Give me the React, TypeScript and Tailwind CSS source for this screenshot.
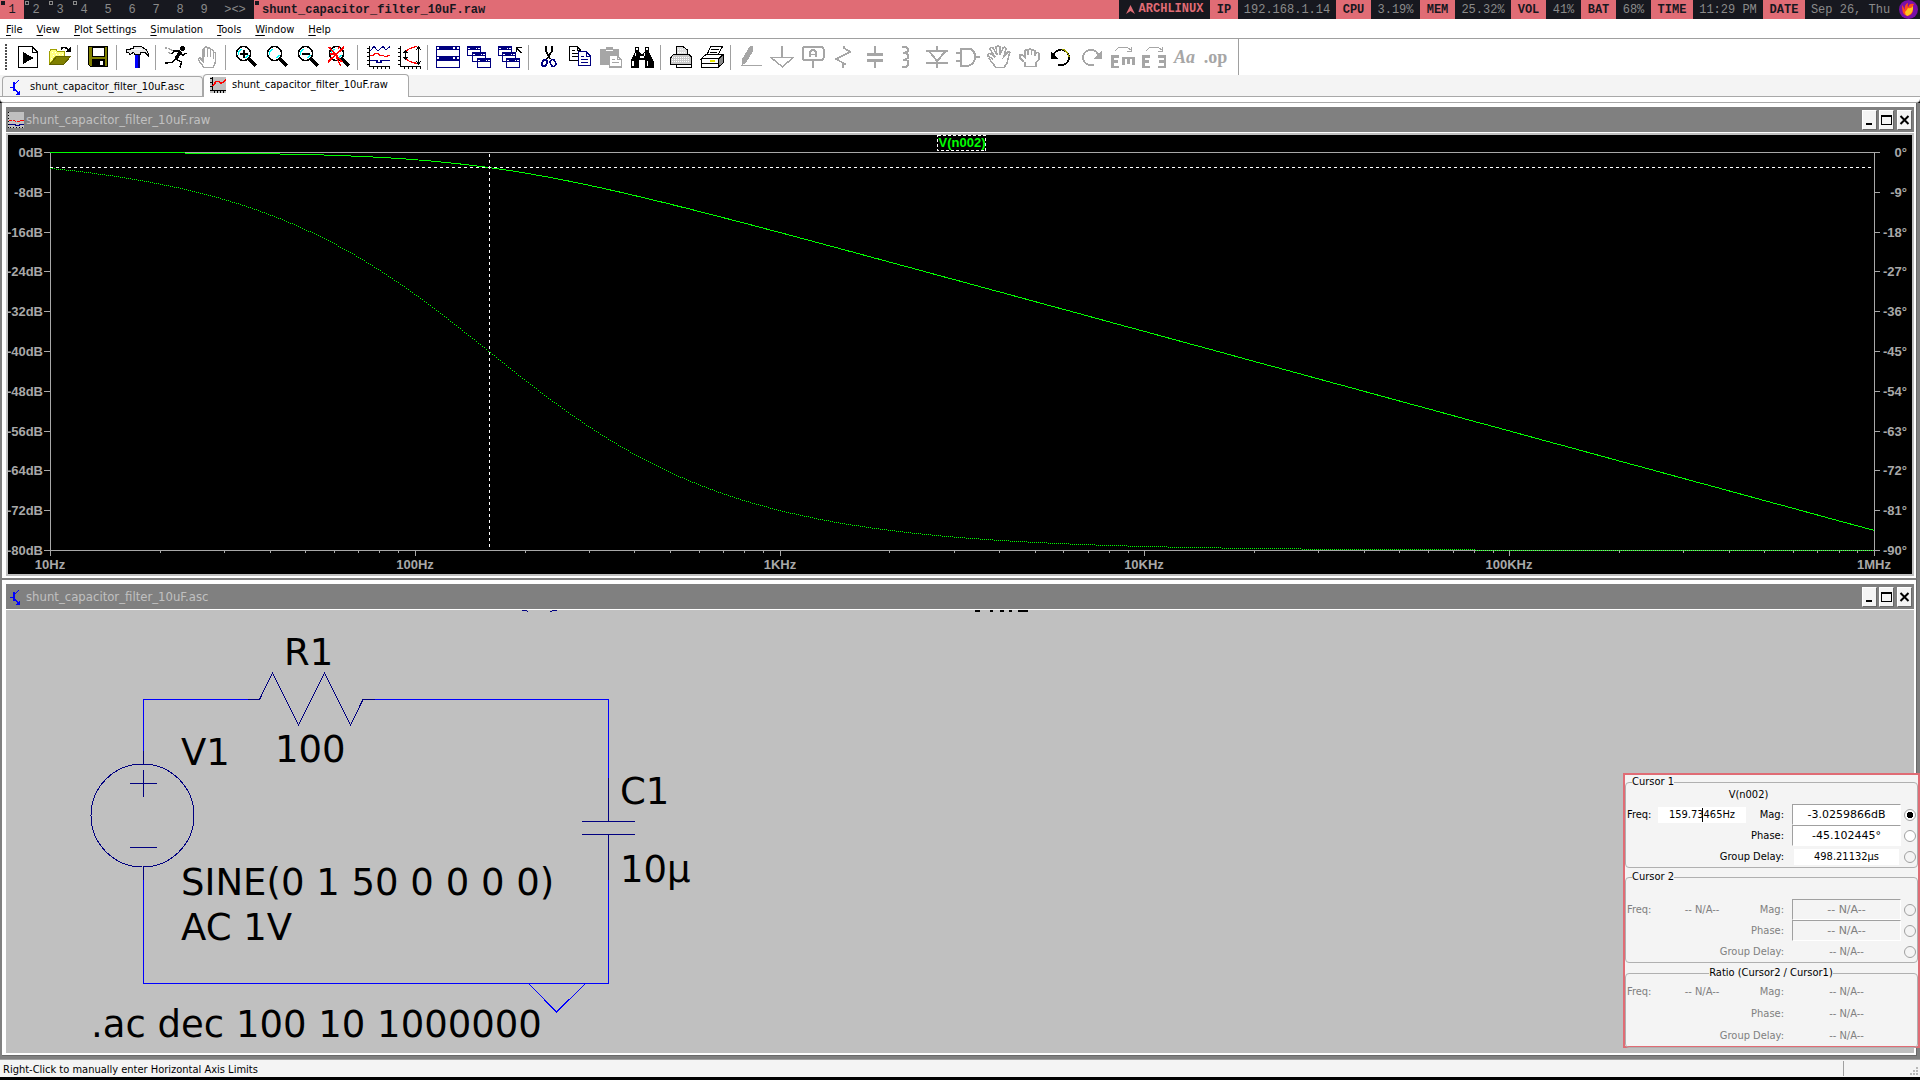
import React from "react";

const UI = "font-['DejaVu_Sans_Condensed','DejaVu_Sans',sans-serif]";

/* ---------- desktop status bar ---------- */

const tags = [
  { n: "1", active: true, mark: true },
  { n: "2", mark: true },
  { n: "3", mark: true },
  { n: "4", mark: true },
  { n: "5" },
  { n: "6" },
  { n: "7" },
  { n: "8" },
  { n: "9" },
];

const stats = [
  { k: "IP", kw: "w-7", v: "192.168.1.14", vw: "w-[98px]" },
  { k: "CPU", kw: "w-[35px]", v: "3.19%", vw: "w-[49px]" },
  { k: "MEM", kw: "w-[35px]", v: "25.32%", vw: "w-14" },
  { k: "VOL", kw: "w-[35px]", v: "41%", vw: "w-[35px]" },
  { k: "BAT", kw: "w-[35px]", v: "68%", vw: "w-[35px]" },
  { k: "TIME", kw: "w-[42px]", v: "11:29 PM", vw: "w-[70px]" },
  { k: "DATE", kw: "w-[42px]", v: "Sep 26, Thu", vw: "w-[91px]" },
];

function StatusStrip() {
  return (
    <header className="flex h-[19px] shrink-0 items-stretch whitespace-nowrap bg-[#17181f] font-['Liberation_Mono',monospace] text-xs leading-[21px] text-[#8a8a8a]">
      {tags.map((t) => (
        <button
          key={t.n}
          className={
            t.active
              ? "relative w-6 shrink-0 bg-[#e06c75] text-center text-[#17181f]"
              : "relative w-6 shrink-0 text-center"
          }
        >
          {t.mark && (
            <span
              className={
                t.active
                  ? "absolute left-px top-px h-1 w-1 bg-[#17181f]"
                  : "absolute left-px top-px h-1 w-1 border border-[#8a8a8a]"
              }
            />
          )}
          {t.n}
        </button>
      ))}
      <button className="w-[38px] shrink-0 text-center">&gt;&lt;&gt;</button>
      <div className="relative min-w-0 flex-1 bg-[#e06c75] pl-2 font-bold text-[#17181f]">
        <span className="absolute left-px top-px h-1 w-1 bg-[#17181f]" />
        shunt_capacitor_filter_10uF.raw
      </div>
      <div className="flex w-[91px] items-center justify-center gap-1 font-bold text-[#e06c75]">
        <svg width="9" height="9" viewBox="0 0 9 9" aria-hidden="true">
          <path d="M4.5 0L9 9L4.5 6L0 9Z" fill="#e06c75" />
        </svg>
        ARCHLINUX
      </div>
      {stats.map((s) => (
        <React.Fragment key={s.k}>
          <div className={`${s.kw} bg-[#e06c75] text-center font-bold text-[#17181f]`}>{s.k}</div>
          <div className={`${s.vw} text-center`}>{s.v}</div>
        </React.Fragment>
      ))}
      <svg width="24" height="19" viewBox="0 0 24 19" aria-hidden="true">
        <circle cx="12.500" cy="9.500" r="9.500" fill="#7b0fa8" />
        <path d="M6 5Q8 7 8.500 10Q8.500 4 12 3Q11 6 12.500 7Q13 3 18 4Q16 6 17 9Q17 15 11.500 16Q7 15 6.500 11Q6 8 6 5Z" fill="#ff4a1c" />
        <path d="M9 12Q11 10 12 8Q15 9 17 6Q18 13 11.500 16Q9 15 9 12Z" fill="#ffc21a" />
      </svg>
    </header>
  );
}

/* ---------- menu ---------- */

const menus = ["File", "View", "Plot Settings", "Simulation", "Tools", "Window", "Help"];

function MenuBar() {
  return (
    <nav className="flex h-5 shrink-0 items-end gap-3.5 border-b border-[#a0a0a0] bg-white pl-1.5 text-[11px] text-black">
      {menus.map((m) => (
        <button key={m} className="whitespace-nowrap leading-4">
          <span className="underline underline-offset-2">{m[0]}</span>
          {m.slice(1)}
        </button>
      ))}
    </nav>
  );
}

/* ---------- toolbar icons ---------- */

const G = "#a6a6a6";
const NAVY = "#000080";

function Lens({ children }: { children?: React.ReactNode }) {
  return (
    <>
      <path d="M15 14L22 21" stroke="#000" strokeWidth="3.500" />
      <circle cx="9.500" cy="8.500" r="7" fill="#fff" stroke="#000" strokeWidth="1.500" />
      <path d="M4.500 10V7L7 4" fill="none" stroke="#00ffff" strokeWidth="1.500" />
      <path d="M12 13L14.500 10" fill="none" stroke="#00ffff" strokeWidth="1.500" />
      {children}
    </>
  );
}

function MiniWindow({ x, y }: { x: number; y: number }) {
  return (
    <>
      <rect x={x + 0.5} y={y + 0.5} width="13" height="9" fill="#fff" stroke={NAVY} />
      <rect x={x} y={y} width="14" height="4" fill={NAVY} />
      <path d={`M${x + 1} ${y + 2}h2M${x + 9} ${y + 2}h1M${x + 11} ${y + 2}h2`} stroke="#fff" />
    </>
  );
}

const icons: Record<string, React.ReactNode> = {
  Run: (
    <>
      <path d="M2.500 1.500H16L21.500 7V22.500H2.500Z" fill="#fff" stroke="#000" strokeWidth="1.300" />
      <path d="M16 1.500V7H21.500" fill="none" stroke="#000" />
      <path d="M7 7L17.500 13L7 19Z" fill="#000" />
    </>
  ),
  Open: (
    <>
      <path d="M2.500 18V6.500L4 4.500H9L10.500 6.500H17.500V11H9L3 19Z" fill="#ffff80" stroke="#a0a000" />
      <path d="M5 7h1M8 7h1M12 9h1M6 10h1M4 13h1M15 9h1M9 9h1" stroke="#fff" />
      <path d="M3 19.500L9.500 11.500H23.500L16.500 19.500Z" fill="#808000" stroke="#606000" />
      <path d="M14 4.500C15 1.500 19 1.500 21.500 5.500" fill="none" stroke="#000" strokeWidth="1.500" />
      <path d="M23.500 2V7H18Z" fill="#000" />
    </>
  ),
  Save: (
    <>
      <path d="M2.500 1.500H21.500V21H4L2.500 19.500Z" fill="#808000" stroke="#000" />
      <rect x="6" y="2" width="12" height="9.500" fill="#fff" stroke="#000" />
      <rect x="6" y="14" width="13" height="7" fill="#000" />
      <rect x="14" y="15.500" width="3" height="4.500" fill="#fff" />
    </>
  ),
  "Control panel": (
    <>
      <rect x="10" y="8" width="5" height="15" fill="#0000ff" />
      <path d="M14 8V23" stroke={NAVY} strokeWidth="2" />
      <path d="M8 4V1.500H16L19.500 3.500Q23 5 23.500 11L20 7.500H16L15 9.500H10L8.500 7.500L5 9.500L3.500 7.500H1V4.500H5L7 3Z" fill="#e8e8e8" stroke="#000" />
      <path d="M7 4.500H17" stroke="#fff" />
    </>
  ),
  "Run simulation": (
    <>
      <circle cx="18.500" cy="3.500" r="2.500" fill="#000" />
      <path d="M16.500 6L12 14" stroke="#000" strokeWidth="3.500" />
      <path d="M16 6L10 6L8 9M15 8L19 10L22.500 8M12 14L17.500 17L16 22.500M12 14L8 17.500L1 18" fill="none" stroke="#000" strokeWidth="1.500" />
      <path d="M1 3L3 3M4 3L9 6M4 7L7 9" stroke={G} strokeWidth="1.300" />
    </>
  ),
  Halt: (
    <path d="M3 14L5 13L8 16V5Q8 3.500 9.500 4V12M9.500 12V3Q10.500 1 12.500 3V12M12.500 4Q14 1.500 15.500 4V12M15.500 5Q17 4 18.500 6V14M18.500 8Q20.500 7 20.500 9V17L18 22.500H9L3 14.500" fill="none" stroke={G} strokeWidth="1.500" />
  ),
  "Zoom in": <Lens><path d="M5.500 8.500H14M9.500 4.500V13" stroke="#000" strokeWidth="2" /></Lens>,
  "Zoom back": <Lens />,
  "Zoom out": <Lens><path d="M5.500 8.500H14" stroke="#000" strokeWidth="2" /></Lens>,
  "Zoom full": (
    <Lens>
      <path d="M2 2L15 17M1 17L17 2" stroke="#ff0000" strokeWidth="1.800" />
      <path d="M3 9H7M11 4L13 1M9 12L14 21" stroke="#ff0000" strokeWidth="1.300" />
    </Lens>
  ),
  Autorange: (
    <>
      <path d="M3.500 1V21.500H24M0.500 3.500H3M0.500 7.500H3M0.500 11.500H3M0.500 15.500H3M0.500 19.500H3M7.500 22V24M11.500 22V24M15.500 22V24M19.500 22V24M23.500 22V24" fill="none" stroke="#000" />
      <path d="M4 6L8 1.500L12 6L17 1.500L20 5L24 1.500" fill="none" stroke={NAVY} />
      <path d="M4 10.500H7L9 8.500H12L14 10.500H17L19 12L24 10" fill="none" stroke="#ff0000" />
      <path d="M4 15.500H11V17.500H15V15.500H24" fill="none" stroke={NAVY} strokeWidth="1.300" />
    </>
  ),
  "Axis limits": (
    <>
      <path d="M3.500 1V21.500H24M0.500 3.500H3M0.500 7.500H3M0.500 11.500H3M0.500 15.500H3M0.500 19.500H3M7.500 22V24M11.500 22V24M15.500 22V24M19.500 22V24M23.500 22V24" fill="none" stroke="#000" />
      <path d="M9 6Q12 3 20 1.500M9 14Q12 17 20 18.500" fill="none" stroke="#ff0000" strokeWidth="1.300" />
      <path d="M8.500 6V14M6.500 8L8.500 6L10.500 8M6.500 12L8.500 14L10.500 12M21.500 2V19M19 5L21.500 2L24 5M19 16L21.500 19L24 16" fill="none" stroke="#000" />
    </>
  ),
  Tile: (
    <>
      <rect x="0.500" y="1.500" width="23" height="10" fill="#fff" stroke={NAVY} />
      <rect x="0" y="1" width="24" height="4" fill={NAVY} />
      <rect x="0.500" y="11.500" width="23" height="11" fill="#fff" stroke={NAVY} />
      <rect x="0" y="11" width="24" height="5" fill={NAVY} />
      <path d="M1 3H3M17 3H19M21 3H23M1 13H3M17 13H19M21 13H23" stroke="#fff" strokeWidth="1.500" />
    </>
  ),
  Cascade: (
    <>
      <MiniWindow x={0} y={1} />
      <MiniWindow x={5} y={7} />
      <MiniWindow x={10} y={13} />
    </>
  ),
  "Close all": (
    <>
      <MiniWindow x={0} y={1} />
      <MiniWindow x={4} y={7} />
      <MiniWindow x={8} y={13} />
      <path d="M18.500 7V2.500H24M19 3L23.500 8" fill="none" stroke="#000" strokeWidth="1.300" />
    </>
  ),
  Cut: (
    <>
      <path d="M9 1V6L13 14M15 1V6L10 14" fill="none" stroke="#000" strokeWidth="1.700" />
      <ellipse cx="7.500" cy="18" rx="2.500" ry="3.500" fill="none" stroke={NAVY} strokeWidth="1.700" transform="rotate(25 7.500 18)" />
      <ellipse cx="16" cy="18" rx="2.500" ry="3.500" fill="none" stroke={NAVY} strokeWidth="1.700" transform="rotate(-25 16 18)" />
    </>
  ),
  Copy: (
    <>
      <path d="M1.500 1.500H9L12.500 5V15.500H1.500Z" fill="#fff" stroke="#000" />
      <path d="M9 1.500V5H12.500M3.500 5.500H7M3.500 8.500H10M3.500 11.500H10" fill="none" stroke="#000" />
      <path d="M10.500 6.500H18L22.500 11V20.500H10.500Z" fill="#fff" stroke={NAVY} strokeWidth="1.300" />
      <path d="M18 6.500V11H22.500M13 11.500H16M13 14.500H20M13 17.500H20" fill="none" stroke={NAVY} />
    </>
  ),
  Paste: (
    <>
      <path d="M1 4H7V2H14V4H20V20H1Z" fill={G} />
      <path d="M7 5.500H14" stroke="#fff" />
      <path d="M10.500 10.500H18L22.500 14.500V22H10.500Z" fill="#fff" stroke={G} strokeWidth="1.300" />
      <path d="M13 14.500H16M13 17.500H20M18 10.500V14.500H22.500" fill="none" stroke={G} />
    </>
  ),
  Find: (
    <>
      <path d="M5 2H9V6L11 9H13L15 6V2H19V7L23.500 16V23H15V15H9V23H0.500V16L5 7Z" fill="#000" />
      <path d="M6 4H8M16 4H18M5.500 8V11M3 16V21M14.500 8V11M17.500 16V21M10 12H14" stroke="#fff" strokeWidth="1.300" />
    </>
  ),
  "Print setup": (
    <>
      <path d="M7.500 9V1.500H14L18.500 5V9" fill="#ddd" stroke="#000" />
      <path d="M1.500 13L4.500 9.500H20L22.500 12V19.500H1.500Z" fill="#c9c9c9" stroke="#000" />
      <path d="M3 12.500H21M3 14.500H21M3 16.500H21M9 4.500H14M9 7H16" stroke="#fff" strokeDasharray="1 1" />
      <path d="M7.500 19.500V22.500H22V19.500" fill="#fff" stroke="#000" />
    </>
  ),
  Print: (
    <>
      <path d="M7 10L10.500 1.500H22.500L18 10Z" fill="#fff" stroke="#000" />
      <path d="M11 4.500H19M10 7H17" stroke="#000" />
      <path d="M1 14L6 9.500H23L18.500 14Z" fill="#fff" stroke="#000" />
      <path d="M18.500 14L23 10V18L18.500 22Z" fill="#888" stroke="#000" />
      <rect x="1" y="13.500" width="17.500" height="8.500" fill="#fff" stroke="#000" />
      <path d="M1 18.500H18" stroke="#000" />
      <path d="M10 16H15" stroke="#e8e800" strokeWidth="1.500" />
    </>
  ),
  Wire: (
    <>
      <path d="M11 1H14V6L7 18L3 20V14Z" fill={G} />
      <path d="M2 20.500H23" stroke={G} />
    </>
  ),
  Ground: <path d="M12 1V11.500M1 12.500H23L12.500 22Z" fill="none" stroke={G} strokeWidth="1.500" />,
  "Label net": (
    <>
      <rect x="1.500" y="2" width="21" height="13" rx="2" fill="none" stroke={G} strokeWidth="2" />
      <path d="M12 15V23M9 12V7L11 5H13L15 7V12M9 9.500H15" fill="none" stroke={G} strokeWidth="1.700" />
    </>
  ),
  Resistor: <path d="M12 1V3L18.500 7L4 14L13 19L11 20V23" fill="none" stroke={G} strokeWidth="1.700" />,
  Capacitor: (
    <>
      <path d="M12 1V9M12 15V23" stroke={G} strokeWidth="1.500" />
      <path d="M4 9.500H20M4 15H20" stroke={G} strokeWidth="3" />
    </>
  ),
  Inductor: <path d="M8 2H12Q15 3 14 6L11 8H9M11 8Q16 9 14 13L11 14.500H9M11 14.500Q16 16 14 20L12 22H8" fill="none" stroke={G} strokeWidth="2" />,
  Diode: <path d="M12 1V5M1 5.500H23M4 6L12 16L21 6M1 17.500H23M12 17V23" fill="none" stroke={G} strokeWidth="2" />,
  Component: <path d="M5 3.500H13Q19 5 19 12Q19 18 13 20.500H5ZM0 8H5M0 16H5M19 12H24" fill="none" stroke={G} strokeWidth="2" />,
  Move: (
    <path d="M6 14L1 11Q0 8 4 9L8 12L3 4Q3 2 6 3L10 10L9 2Q11 0 13 2V10L16 3Q18 1 19 4L17 11L21 7Q24 6 22 10L20 18L17 22.500H9L1.500 13" fill="none" stroke={G} strokeWidth="1.500" />
  ),
  Drag: (
    <path d="M6 17L2 13V10Q4 9 7 12V6Q8 4 10 6V10V5Q12 3 13.500 5V10V6Q15 4 17 6V11L18 8Q21 6 21 10V14L18 18V21.500H7V17" fill="none" stroke={G} strokeWidth="1.500" />
  ),
  Undo: (
    <>
      <path d="M3 12Q8 3 14 5Q21 8 20 14Q18 21 9 20" fill="none" stroke="#000" strokeWidth="1.600" />
      <path d="M13 4Q19 6 20 12" fill="none" stroke="#a0a000" strokeWidth="1.300" />
      <path d="M1.500 6V14H9Z" fill="#000" />
    </>
  ),
  Redo: (
    <>
      <path d="M20 12Q15 3 9 5Q2 8 3 14Q5 21 14 20" fill="none" stroke={G} strokeWidth="1.700" />
      <path d="M21.500 6V14H14Z" fill={G} />
    </>
  ),
  Rotate: (
    <>
      <path d="M4 6L8 2H16L20 5M20 2V6H16" fill="none" stroke={G} />
      <path d="M8 11.500H1.500V22H8M1.500 16.500H7M11 13H24M12.500 13V20M17.500 13V19M22.500 13V20" fill="none" stroke={G} strokeWidth="2.500" />
    </>
  ),
  Mirror: (
    <>
      <path d="M4 6L8 2H16L20 5M20 2V6H16" fill="none" stroke={G} />
      <path d="M8 11.500H1.500V22H8M1.500 16.500H7M16 11.500H23V22H16M23 16.500H17" fill="none" stroke={G} strokeWidth="2.500" />
    </>
  ),
};

type Tool = { name: string; text?: string; textClass?: string };

const toolGroups: Tool[][] = [
  [{ name: "Run" }, { name: "Open" }],
  [{ name: "Save" }],
  [{ name: "Control panel" }],
  [{ name: "Run simulation" }, { name: "Halt" }],
  [{ name: "Zoom in" }, { name: "Zoom back" }, { name: "Zoom out" }, { name: "Zoom full" }],
  [{ name: "Autorange" }, { name: "Axis limits" }],
  [{ name: "Tile" }, { name: "Cascade" }, { name: "Close all" }],
  [{ name: "Cut" }, { name: "Copy" }, { name: "Paste" }, { name: "Find" }],
  [{ name: "Print setup" }, { name: "Print" }],
  [
    { name: "Wire" },
    { name: "Ground" },
    { name: "Label net" },
    { name: "Resistor" },
    { name: "Capacitor" },
    { name: "Inductor" },
    { name: "Diode" },
    { name: "Component" },
    { name: "Move" },
    { name: "Drag" },
    { name: "Undo" },
    { name: "Redo" },
    { name: "Rotate" },
    { name: "Mirror" },
    { name: "Text", text: "Aa", textClass: "font-['Liberation_Serif',serif] text-lg font-bold italic" },
    { name: "SPICE directive", text: ".op", textClass: "font-['Liberation_Serif',serif] text-lg font-bold" },
  ],
];

function Toolbar() {
  return (
    <div className="flex h-9 shrink-0 bg-white">
      <div className="flex items-center border-r border-[#a0a0a0] pr-[7px]">
        <span className="ml-[5px] mr-[5px] h-[26px] w-0.5 bg-[repeating-linear-gradient(#000_0_2px,#fff_2px_3px)] opacity-70" />
        {toolGroups.map((g, i) => (
          <React.Fragment key={i}>
            {i > 0 && <span className="ml-[3px] mr-1 h-[25px] w-px bg-[#a0a0a0]" />}
            {g.map((t) => (
              <button
                key={t.name}
                aria-label={t.name}
                className="flex h-6 w-[31px] items-center justify-center leading-6 text-[#a6a6a6]"
              >
                {t.text ? (
                  <span className={t.textClass}>{t.text}</span>
                ) : (
                  <svg width="24" height="24" viewBox="0 0 24 24" shapeRendering="crispEdges" aria-hidden="true">
                    {icons[t.name]}
                  </svg>
                )}
              </button>
            ))}
          </React.Fragment>
        ))}
      </div>
    </div>
  );
}

/* ---------- document tabs ---------- */

function SchematicIcon() {
  return (
    <svg width="16" height="16" viewBox="0 0 16 16" shapeRendering="crispEdges" className="shrink-0" aria-hidden="true">
      <path d="M2 8H5" stroke="#0000ff" />
      <path d="M5.500 3V12" stroke="#0000ff" strokeWidth="2" />
      <path d="M6 6L11 1M6 9L11 15" fill="none" stroke="#0000ff" strokeWidth="1.300" />
      <path d="M11.500 12V15.500H8Z" fill="#0000ff" />
    </svg>
  );
}

function WaveIcon({ two }: { two?: boolean }) {
  return (
    <svg width="16" height="16" viewBox="0 0 16 16" shapeRendering="crispEdges" className="shrink-0" aria-hidden="true">
      <rect width="16" height="16" fill="#c0c0c0" />
      {two ? (
        <>
          <path d="M0.500 0V16M2 15.500H16" stroke="#000" strokeDasharray="1 2" />
          <path d="M1 8.500H6L8 9.500H11L13 8.500H16" fill="none" stroke="#ff0000" strokeDasharray="3 1" />
          <path d="M1 12.500H7V13.500H11V12.500H16" fill="none" stroke={NAVY} />
        </>
      ) : (
        <>
          <path d="M2.500 0V13.500H16M0 1.500H2M0 5.500H2M0 9.500H2M0 13.500H2M4.500 14V16M7.500 14V16M10.500 14V16M13.500 14V16" fill="none" stroke="#000" strokeWidth="1.300" />
          <path d="M3 9L6 4.500H9L11 6.500L16 3" fill="none" stroke="#ff0000" strokeWidth="1.500" />
        </>
      )}
    </svg>
  );
}

function Tabs() {
  return (
    <div className="flex h-[22px] shrink-0 items-end border-b border-[#a8a8a8] bg-[#f4f4f4] pl-0.5 text-[11px] text-black">
      <button className="flex h-5 w-[201px] items-center gap-1.5 rounded-t-sm border border-b-0 border-[#a8a8a8] pl-[5px] pt-px">
        <SchematicIcon />
        shunt_capacitor_filter_10uF.asc
      </button>
      <button className="-mb-px flex h-[23px] w-[206px] items-center gap-1.5 rounded-t-sm border border-b-0 border-[#a8a8a8] bg-white pb-0.5 pl-1.5">
        <WaveIcon />
        shunt_capacitor_filter_10uF.raw
      </button>
    </div>
  );
}

/* ---------- MDI window ---------- */

function Caption({ icon, title }: { icon: React.ReactNode; title: string }) {
  const btn =
    "flex h-5 w-[15px] items-center justify-center border border-b-[#696969] border-l-white border-r-[#696969] border-t-white bg-[#f4f4f4]";
  return (
    <div className="flex h-[25px] items-center bg-[#808080] pl-0.5 pr-0.5 text-[#c0c0c0]">
      {icon}
      <h2 className="ml-0.5 flex-1 text-[13px] leading-5">{title}</h2>
      <button aria-label="Minimize" className={btn}>
        <svg width="11" height="12" viewBox="0 0 11 12" shapeRendering="crispEdges">
          <path d="M2 10H8" stroke="#000" strokeWidth="2" />
        </svg>
      </button>
      <button aria-label="Maximize" className={`${btn} ml-0.5`}>
        <svg width="11" height="12" viewBox="0 0 11 12" shapeRendering="crispEdges">
          <rect x="0.500" y="1.500" width="10" height="9" fill="none" stroke="#000" />
          <path d="M0 2H11" stroke="#000" strokeWidth="2" />
        </svg>
      </button>
      <button aria-label="Close" className={`${btn} ml-[3px]`}>
        <svg width="11" height="12" viewBox="0 0 11 12">
          <path d="M1.500 2L9.500 10M9.500 2L1.500 10" stroke="#000" strokeWidth="2" />
        </svg>
      </button>
    </div>
  );
}

/* ---------- Bode plot ---------- */

const PX0 = 42;
const PX1 = 1866;
const PY0 = 17;
const PY1 = 415;
const F0 = 159.155;

const samples = Array.from({ length: 501 }, (_, i) => i / 100);
const xAt = (decade: number) => PX0 + (decade / 5) * (PX1 - PX0);

const magnitude = samples
  .map((d) => {
    const r = (10 * 10 ** d) / F0;
    const db = 10 * Math.log10(1 + r * r);
    return `${xAt(d).toFixed(1)},${(PY0 + 0.5 + (db / 80) * (PY1 - PY0)).toFixed(1)}`;
  })
  .join(" ");

// One pixel on, one pixel off along the frequency axis.
const phase = Array.from({ length: (PX1 - PX0) / 2 }, (_, i) => {
  const x = PX0 + 2 * i;
  const d = ((x - PX0) / (PX1 - PX0)) * 5;
  const deg = (Math.atan((10 * 10 ** d) / F0) * 180) / Math.PI;
  return `M${x} ${Math.round(PY0 + (deg / 90) * (PY1 - PY0)) + 0.5}h1`;
}).join("");

const decades = ["10Hz", "100Hz", "1KHz", "10KHz", "100KHz", "1MHz"];

function BodePlot() {
  return (
    <svg
      viewBox="0 0 1904 439"
      className="block h-auto w-full bg-black font-['Liberation_Sans',sans-serif] text-[13px] font-bold"
      shapeRendering="crispEdges"
      role="img"
      aria-label="Magnitude and phase of V(n002)"
    >
      <g stroke="#a8a8a8" fill="none">
        <path d={`M36 ${PY0 + 0.5}H1872M36 ${PY1 + 0.5}H1872M${PX0 + 0.5} ${PY0}V421M${PX1 + 0.5} ${PY0}V421`} />
        {Array.from({ length: 9 }, (_, i) => {
          const y = Math.round(PY0 + (i + 1) * 39.8) + 0.5;
          return <path key={i} d={`M36 ${y}H${PX0}M${PX1} ${y}H1872`} />;
        })}
        {decades.slice(0, 5).map((_, d) =>
          [1, 2, 3, 4, 5, 6, 7, 8, 9].map((m) => {
            const x = Math.round(xAt(d + Math.log10(m))) + 0.5;
            return <path key={`${d}-${m}`} d={`M${x} ${PY1}v${m === 1 ? 6 : 3}`} />;
          }),
        )}
      </g>
      <g fill="#a8a8a8">
        {Array.from({ length: 11 }, (_, i) => {
          const y = Math.round(PY0 + i * 39.8) + 5;
          return (
            <React.Fragment key={i}>
              <text x="35" y={y} textAnchor="end">{`${-8 * i}dB`}</text>
              <text x="1899" y={y} textAnchor="end">{`${-9 * i}°`}</text>
            </React.Fragment>
          );
        })}
        {decades.map((t, d) => (
          <text key={t} x={Math.round(xAt(d))} y="434" textAnchor="middle">
            {t}
          </text>
        ))}
      </g>
      <polyline points={magnitude} fill="none" stroke="#00ff00" />
      <path d={phase} fill="none" stroke="#00ff00" />
      <path d="M42 32.500H1866M481.500 19V415" fill="none" stroke="#fff" strokeDasharray="3 3" />
      <rect x="929.500" y="0.500" width="48" height="15" fill="none" stroke="#fff" strokeDasharray="3 2" />
      <text x="954" y="12" textAnchor="middle" fill="#00ff00">
        V(n002)
      </text>
    </svg>
  );
}

/* ---------- schematic ---------- */

function Schematic() {
  return (
    <svg
      width="1100"
      height="443"
      viewBox="6 610 1100 443"
      className="block font-['DejaVu_Sans',sans-serif] text-[37px]"
      shapeRendering="crispEdges"
      role="img"
      aria-label="RC shunt capacitor filter"
    >
      <g fill="none" stroke="#0000ff">
        <path d="M259 699.500H143.500V764M143.500 867V983.500H608.500V834M608.500 821V699.500H363" />
        <path d="M528.500 983.500L556.500 1012L585.500 983.500" />
      </g>
      <g fill="none" stroke="#000080">
        <circle cx="142.500" cy="815.500" r="51.500" />
        <path d="M130 783.500H157M143.500 770V797M130 847.500H157" />
        <path d="M248 699.500H259.500L272.500 673L298.500 725L324.500 673L350.500 725L363 699.500H375" />
        <path d="M582 821.500H635M582 834.500H635M608.500 778V821M608.500 834V880M143.500 751V764M143.500 867V880" />
        <path d="M522 610.500H526L528 611.500M550 611.500L554 610.500H557" />
      </g>
      <path d="M975 610.500H980M990 610.500H993M1000 610.500H1004M1009 610.500H1012M1018 610.500H1028" stroke="#000" strokeWidth="2" />
      <text x="284" y="665">R1</text>
      <text x="275" y="762">100</text>
      <text x="181" y="765">V1</text>
      <text x="181" y="895">SINE(0 1 50 0 0 0 0)</text>
      <text x="181" y="940">AC 1V</text>
      <text x="620" y="804">C1</text>
      <text x="620" y="882">10µ</text>
      <text x="91" y="1037">.ac dec 100 10 1000000</text>
    </svg>
  );
}

/* ---------- cursor read-out ---------- */

const boxed =
  "h-[21px] w-[109px] border border-b-white border-l-[#a0a0a0] border-r-white border-t-[#a0a0a0] text-center font-['DejaVu_Sans',sans-serif] text-[11px]";
const plain = "mx-0.5 h-4 w-[105px] text-center text-[11px]";

type Field = { label: string; value: string; box?: boolean; checked?: boolean };

function CursorGroup({
  id,
  title,
  trace,
  freq,
  fields,
  live,
  radios,
  centred,
}: {
  id: string;
  title: string;
  trace?: string;
  freq: string;
  fields: Field[];
  live?: boolean;
  radios?: boolean;
  centred?: boolean;
}) {
  return (
    <fieldset
      className={`rounded-sm border border-[#b0b0b0] pr-px ${live ? "text-black" : "text-[#808080]"} ${centred ? "mt-1" : "mt-px"}`}
    >
      <legend className={`h-3 leading-3 text-black ${centred ? "mx-auto" : "ml-1.5"}`}>{title}</legend>
      {centred ? <div className="h-0.5" /> : <div className="h-4 pr-[45px] text-center leading-[13px]">{trace}</div>}
      {fields.map((f, i) => (
        <div key={f.label} className={centred ? "flex h-[22px] items-center" : "flex h-[21px] items-center"}>
          {i === 0 && (
            <>
              <label htmlFor={`${id}-freq`} className="w-8 pl-px">
                Freq:
              </label>
              <span className="relative flex">
                <input
                  id={`${id}-freq`}
                  readOnly
                  defaultValue={freq}
                  className={`h-4 w-[88px] text-center text-[11px] ${live ? "bg-white" : "bg-transparent"}`}
                />
                {live && <span className="absolute left-1/2 top-px h-3.5 w-px bg-black" />}
              </span>
            </>
          )}
          <label htmlFor={`${id}-${i}`} className="ml-auto pr-2">
            {f.label}
          </label>
          <input
            id={`${id}-${i}`}
            readOnly
            defaultValue={f.value}
            className={`${f.box ? boxed : plain} ${live ? "bg-white" : "bg-transparent"}`}
          />
          {radios ? (
            <input
              type="radio"
              name={id}
              aria-label={`${title} ${f.label}`}
              defaultChecked={f.checked}
              className={`ml-[3px] h-3 w-3 appearance-none rounded-full border border-[#a0a0a0] checked:bg-[radial-gradient(circle,#000_0_3px,#fff_3px)] ${live && i < 2 ? "bg-white" : ""}`}
            />
          ) : (
            <span className="ml-[3px] w-3" />
          )}
        </div>
      ))}
    </fieldset>
  );
}

function CursorDialog() {
  return (
    <aside className="absolute bottom-8 right-0 h-[275px] w-[297px] border-2 border-[#e06c75] bg-[#f4f4f4] text-[11px] leading-4">
      <CursorGroup
        id="c1"
        title="Cursor 1"
        trace="V(n002)"
        freq="159.73465Hz"
        live
        radios
        fields={[
          { label: "Mag:", value: "-3.0259866dB", box: true, checked: true },
          { label: "Phase:", value: "-45.102445°", box: true },
          { label: "Group Delay:", value: "498.21132µs" },
        ]}
      />
      <div className="h-0.5" />
      <CursorGroup
        id="c2"
        title="Cursor 2"
        freq="-- N/A--"
        radios
        fields={[
          { label: "Mag:", value: "-- N/A--", box: true },
          { label: "Phase:", value: "-- N/A--", box: true },
          { label: "Group Delay:", value: "-- N/A--" },
        ]}
      />
      <CursorGroup
        id="ratio"
        title="Ratio (Cursor2 / Cursor1)"
        freq="-- N/A--"
        centred
        fields={[
          { label: "Mag:", value: "-- N/A--" },
          { label: "Phase:", value: "-- N/A--" },
          { label: "Group Delay:", value: "-- N/A--" },
        ]}
      />
    </aside>
  );
}

/* ---------- page ---------- */

export default function App() {
  return (
    <div className={`relative flex min-h-screen flex-col bg-black ${UI}`}>
      <StatusStrip />
      <MenuBar />
      <Toolbar />
      <Tabs />
      <div className="h-1.5 shrink-0 rounded-b-sm border-b border-[#a8a8a8] bg-white" />

      <main className="flex flex-1 flex-col bg-[#808080] pr-[3px]">
        <section className="ml-0.5 border-r border-r-[#696969] bg-white pb-0.5 pl-1 pr-0.5 pt-1">
          <Caption icon={<WaveIcon two />} title="shunt_capacitor_filter_10uF.raw" />
          <div className="mt-px border-x-2 border-y-2 border-[#c0c0c0]">
            <BodePlot />
          </div>
        </section>
        <section className="ml-0.5 flex flex-1 flex-col border-b border-r border-t-2 border-b-[#696969] border-r-[#696969] border-t-[#808080] bg-white pb-0.5 pl-1 pr-0.5 pt-1">
          <Caption icon={<SchematicIcon />} title="shunt_capacitor_filter_10uF.asc" />
          <div className="mt-px flex-1 overflow-hidden bg-[#c0c0c0]">
            <Schematic />
          </div>
        </section>
        <div className="h-[3px]" />
      </main>

      <footer className="mb-[3px] flex h-[18px] shrink-0 items-stretch border-t border-[#a0a0a0] bg-[#f4f4f4] pl-[3px] text-[11px] leading-5 text-black">
        <span className="h-4 flex-1">Right-Click to manually enter Horizontal Axis Limits</span>
        <span className="my-px w-[79px] border-l border-[#a0a0a0]" />
        <svg width="10" height="10" viewBox="0 0 10 10" className="-ml-3 self-end" aria-hidden="true">
          <path d="M6 0h2v2h-2zM6 3h2v2h-2zM3 3h2v2h-2zM6 6h2v2h-2zM3 6h2v2h-2zM0 6h2v2h-2z" fill="#b8b8b8" />
        </svg>
      </footer>

      <CursorDialog />
    </div>
  );
}
